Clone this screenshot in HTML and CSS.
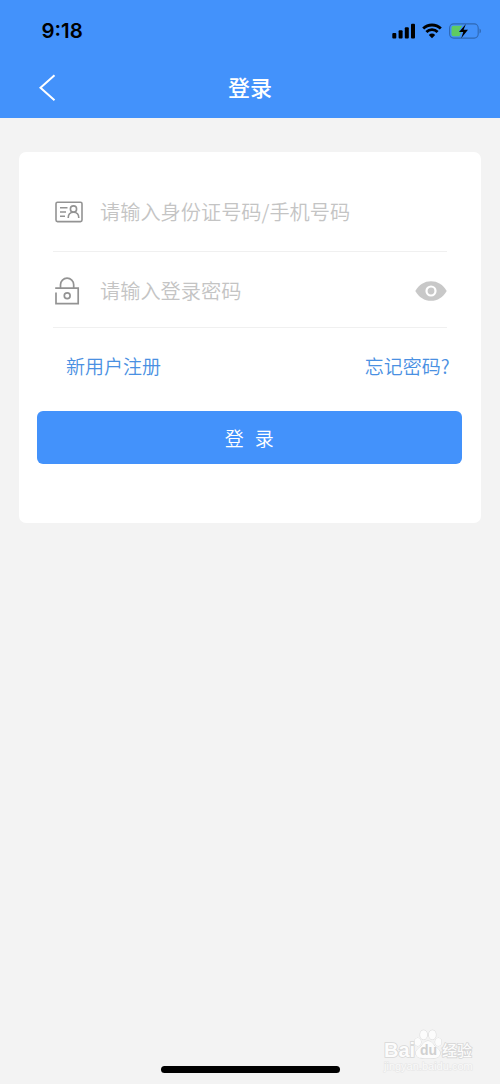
FILE: index.html
```
<!DOCTYPE html>
<html lang="zh-CN">
<head>
    <meta charset="UTF-8">
    <meta name="viewport" content="width=device-width, initial-scale=1.0">
    <title>登录</title>
    <link rel="stylesheet" href="styles.css">
</head>
<body>

<header class="header">
    <div class="status-bar">
        <span class="time">9:18</span>
        <div class="status-icons">
            <svg width="24" height="16" viewBox="0 0 24 16">
                <rect x="0.3" y="10" width="4" height="5.5" rx="1"/>
                <rect x="6.6" y="7.3" width="4" height="8.2" rx="1"/>
                <rect x="12.8" y="4.3" width="4" height="11.2" rx="1"/>
                <rect x="19" y="0.8" width="4" height="14.7" rx="1"/>
            </svg>
            <svg class="wifi" width="20" height="16" viewBox="0 0 20 16">
                <path d="M1.2 5.6a12.6 12.6 0 0 1 17.6 0M4.4 9a8 8 0 0 1 11.2 0" fill="none" stroke="#000" stroke-width="2.8"/>
                <path d="M10 15.2L6.8 12a4.7 4.7 0 0 1 6.4 0z"/>
            </svg>
            <svg class="battery" width="33" height="16" viewBox="0 0 33 16">
                <rect x="0.6" y="0.9" width="28.6" height="14.2" rx="4" fill="none" stroke="#2f68b4" stroke-width="1.1"/>
                <path d="M30.5 5.5c2 1 2 4 0 5z" fill="#2f68b4"/>
                <path d="M4.5 2.8h8.7l-3.5 5.6h2.4l-1.6 4.8h-6a2 2 0 0 1-2-2V4.8a2 2 0 0 1 2-2z" fill="#5ecb62"/>
                <path d="M16.9 1L10 9h4.3l-2.1 6.2 6.8-8.4h-4.4z"/>
            </svg>
        </div>
    </div>
    <div class="nav-bar">
        <a class="back" href="#">
            <svg width="18" height="28" viewBox="0 0 18 28">
                <path d="M16.5 1.3L2.5 13.8 16.5 26.3" fill="none" stroke="#fff" stroke-width="2"/>
            </svg>
        </a>
        <h1 class="title">登录</h1>
    </div>
</header>

<main class="card">
    <div class="field account">
        <svg class="field-icon" width="28" height="22" viewBox="0 0 28 22">
            <g fill="none" stroke="#939393" stroke-width="1.6">
                <rect x="1" y="1.2" width="26" height="19.4" rx="1.5"/>
                <path d="M5 6.8h7.5M5 11h6M5 15.2h5"/>
                <circle cx="18.5" cy="8" r="3.1"/>
                <path d="M13.2 17c0-3.6 2-5.7 5.3-5.7s5.3 2.1 5.3 5.7"/>
            </g>
        </svg>
        <input class="field-input" type="text" placeholder="请输入身份证号码/手机号码">
    </div>
    <div class="field password">
        <svg class="field-icon" width="28" height="28" viewBox="0 0 28 28">
            <g fill="none" stroke="#939393" stroke-width="1.7">
                <path d="M5.5 11V7.8a6.6 6.6 0 0 1 13.2 0V11"/>
                <path d="M0.2 11.2h23v15.4H1V15.5"/>
                <circle cx="12.2" cy="18.7" r="2.9"/>
            </g>
        </svg>
        <input class="field-input" type="text" placeholder="请输入登录密码">
        <svg class="eye" width="32" height="20" viewBox="0 0 32 20">
            <path d="M0.3 10C4 3.5 9.5 0.2 16 0.2S28 3.5 31.7 10C28 16.5 22.5 19.8 16 19.8S4 16.5 0.3 10z" fill="#c8c8c8"/>
            <circle cx="16" cy="10" r="4.5" fill="#c8c8c8" stroke="#fff" stroke-width="2.2"/>
        </svg>
    </div>
    <div class="links">
        <a href="#">新用户注册</a>
        <a href="#">忘记密码?</a>
    </div>
    <button class="login-btn">登 录</button>
</main>

<div class="home-indicator"></div>

<div class="watermark">
    <div class="brand">
        <span class="brand-text">Bai</span>
        <span class="paw">
            <svg width="28" height="30" viewBox="0 0 28 30">
                <g fill="#fcfcfc" stroke="#d4d4d4" stroke-width="0.9">
                    <ellipse cx="3.8" cy="13" rx="3.2" ry="3.9"/>
                    <ellipse cx="9.6" cy="5.8" rx="3.5" ry="4.6"/>
                    <ellipse cx="18.4" cy="5.8" rx="3.5" ry="4.6"/>
                    <ellipse cx="24.3" cy="13" rx="3.2" ry="3.9"/>
                    <path d="M14 12c3.5 0 5 3 7 5.300 3.500 3 5.800 4.500 5 8-1 4-5 3.900-12 3.900s-11 .1-12-3.900c-.8-3.500 1.500-5 5-8 2-2.300 3.500-5.300 7-5.300z"/>
                </g>
            </svg>
            <span class="du">du</span>
        </span>
        <span class="brand-cn">经验</span>
    </div>
    <div class="site">jingyan.baidu.com</div>
</div>

</body>
</html>
```

FILE: styles.css
```
* {
    box-sizing: border-box;
}

body {
    position: relative;
    margin: 0;
    height: 1084px;
    overflow: hidden;
    background-color: #f3f3f3;
    font-family: "Liberation Sans", "Noto Sans CJK SC", sans-serif;
}

a {
    text-decoration: none;
}

svg {
    display: block;
    flex-shrink: 0;
}

.header {
    height: 118px;
    background-color: #4392fb;
}

.status-bar {
    display: flex;
    justify-content: space-between;
    align-items: center;
    height: 58px;
    padding: 3px 18px 0 41.5px;
}

.time {
    font-family: Inter, sans-serif;
    font-size: 20.4px;
    font-weight: 600;
    color: #000;
}

.status-icons {
    display: flex;
    align-items: center;
}

.wifi {
    margin-left: 6px;
}

.battery {
    margin-left: 7px;
}

.nav-bar {
    display: grid;
    grid-template-columns: 60px 1fr 60px;
    align-items: center;
    height: 60px;
}

.back {
    padding-left: 38px;
}

.title {
    margin: -4px 0 0;
    font-family: "Noto Sans CJK SC", sans-serif;
    font-size: 22px;
    font-weight: 500;
    line-height: 30px;
    text-align: center;
    color: #fff;
}

.card {
    height: 371px;
    margin: 34px 19px 0 18.5px;
    padding: 20px 19.5px 0 18.5px;
    border-radius: 7px;
    background-color: #fff;
}

.field {
    display: flex;
    align-items: center;
    margin: 0 15px 0 16px;
    border-bottom: 1px solid #f0f0f0;
}

.account {
    height: 80px;
    padding-left: 2px;
}

.password {
    height: 76px;
    padding: 2px 0 0 2px;
}

.field-icon {
    margin-right: 17px;
}

.field-input {
    flex: 1;
    min-width: 0;
    padding: 0;
    border: none;
    outline: none;
    background: transparent;
    font-family: "Noto Sans CJK SC", sans-serif;
    font-size: 20.2px;
    font-weight: 350;
    line-height: 30px;
    color: #333;
}

.field-input::placeholder {
    color: #c4c4c4;
    opacity: 1;
}

.password .field-input {
    padding-top: 1px;
}

.links {
    display: flex;
    justify-content: space-between;
    padding: 24px 12px 0 29px;
    font-family: "Noto Sans CJK SC", sans-serif;
    font-size: 19px;
    font-weight: 350;
    line-height: 28px;
}

.links a {
    color: #4a90e2;
}

.login-btn {
    display: block;
    width: 100%;
    height: 53px;
    margin-top: 31px;
    padding: 0;
    border: none;
    border-radius: 6px;
    background-color: #4392fb;
    font-family: "Noto Sans CJK SC", sans-serif;
    font-size: 19px;
    font-weight: 350;
    word-spacing: 7px;
    color: #fff;
}

.home-indicator {
    position: absolute;
    left: 161px;
    bottom: 11px;
    width: 179px;
    height: 7px;
    border-radius: 4px;
    background-color: #000;
}

.watermark {
    position: absolute;
    left: 384px;
    top: 1029px;
    width: 100px;
    color: #fcfcfc;
    -webkit-text-stroke: 1.6px #d6d6d6;
    paint-order: stroke fill;
}

.brand {
    display: flex;
    align-items: flex-end;
    height: 30px;
}

.brand-text {
    font-size: 20px;
    font-weight: bold;
    line-height: 18px;
    width: 30px;
}

.paw {
    position: relative;
}

.du {
    position: absolute;
    left: 6px;
    bottom: 2px;
    font-size: 14px;
    font-weight: bold;
    line-height: 14px;
    color: #d0d0d0;
    -webkit-text-stroke: 0;
}

.brand-cn {
    font-family: "Noto Sans CJK SC", sans-serif;
    font-size: 15px;
    font-weight: 500;
    line-height: 18px;
}

.site {
    margin-top: 1px;
    font-size: 11px;
    line-height: 13px;
    white-space: nowrap;
    color: #fafafa;
    -webkit-text-stroke: 1.2px #e6e6e6;
}
```
